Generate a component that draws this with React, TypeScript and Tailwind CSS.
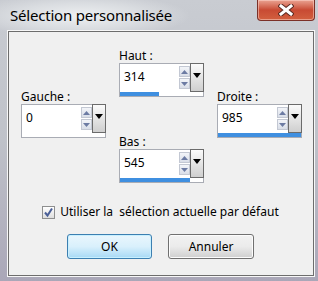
import React from 'react'

// Spin box with arrows, drop button and a progress bar underneath
function SpinBox({ value, fill }: { value: string; fill: number }) {
  return (
    <div className="flex h-[34px] w-[85px] flex-col border border-[#a9acb4] bg-white">
      <div className="flex h-[28px]">
        <div className="flex-1 pl-[4px] pt-[5px] text-[12px] leading-[15px] text-black">{value}</div>
        <div className="flex w-[11px] flex-col gap-[1px] pt-[2px]">
          <div className="flex h-[11px] items-center justify-center border border-[#c3c8d3] bg-gradient-to-b from-[#f3f5f9] to-[#d9dee8]">
            <svg width="7" height="4" viewBox="0 0 7 4">
              <polygon points="0,4 3.5,0 7,4" fill="#6c7ba3" />
            </svg>
          </div>
          <div className="flex h-[11px] items-center justify-center border border-[#c3c8d3] bg-gradient-to-b from-[#f3f5f9] to-[#d9dee8]">
            <svg width="7" height="4" viewBox="0 0 7 4">
              <polygon points="0,0 3.5,4 7,0" fill="#6c7ba3" />
            </svg>
          </div>
        </div>
        <div className="-mr-[1px] -mt-[1px] flex h-[29px] w-[14px] justify-center border border-[#6b6b6b] bg-gradient-to-b from-[#fbfbfb] to-[#cfcfcf] pt-[9px]">
          <svg width="8" height="5" viewBox="0 0 8 5">
            <polygon points="0,0 4,5 8,0" fill="#000" />
          </svg>
        </div>
      </div>
      <div className="mt-auto h-[4px] w-full">
        <div className="h-full bg-[#3f8fe0]" style={{ width: `${fill}%` }} />
      </div>
    </div>
  )
}

function Field({ label, value, fill }: { label: string; value: string; fill: number }) {
  return (
    <div className="flex flex-col">
      <div className="h-[15px] text-[12px] leading-[15px] text-black">{label}</div>
      <SpinBox value={value} fill={fill} />
    </div>
  )
}

export default function App() {
  return (
    <div
      className="flex h-[281px] w-[318px] flex-col overflow-hidden bg-gradient-to-b from-[#c9ccd2] via-[#bfc2c9] to-[#aaa7b8]"
      style={{ fontFamily: '"Noto Sans", "Open Sans", sans-serif' }}
    >
      {/* Title bar */}
      <div className="flex h-[31px] items-start bg-[radial-gradient(ellipse_110px_22px_at_80px_16px,#eef0f2_0%,#d9dce0_60%,transparent_100%)]">
        <div className="pl-[10px] pt-[5px] text-[15px] leading-[20px] tracking-[-0.2px] text-black">
          Sélection personnalisée
        </div>
        <div className="ml-auto mr-[3px] flex h-[21px] w-[58px] items-center justify-center rounded-b-[4px] border border-t-0 border-[#7b3028] bg-gradient-to-b from-[#e9a392] via-[#c84a33] to-[#d2603f] shadow-[inset_0_0_0_1px_rgba(255,220,210,0.5)]">
          <svg width="16" height="12" viewBox="0 0 16 12">
            <path d="M3 2 L13 10 M13 2 L3 10" stroke="#5a2a22" strokeWidth="5" strokeLinecap="square" />
            <path d="M3 2 L13 10 M13 2 L3 10" stroke="#fff" strokeWidth="3" strokeLinecap="square" />
          </svg>
        </div>
      </div>

      {/* Body */}
      <div className="ml-[8px] mr-[4px] flex h-[245px] flex-col border border-[#6d6d6d] bg-[#f0f0f0] pl-[12px] pr-[11px] shadow-[0_0_0_1px_#f7f7f7]">
        <div className="flex gap-[13px]">
          <div className="pt-[57px]">
            <Field label="Gauche :" value="0" fill={0} />
          </div>
          <div className="flex flex-col gap-[37px] pt-[16px]">
            <Field label="Haut :" value="314" fill={47} />
            <Field label="Bas :" value="545" fill={84} />
          </div>
          <div className="pt-[57px]">
            <Field label="Droite :" value="985" fill={100} />
          </div>
        </div>

        <div className="mt-[21px] flex h-[16px] items-center justify-center gap-[5px] pr-[2px]">
          <div className="flex h-[13px] w-[13px] items-center justify-center border border-[#8e8f8f] bg-gradient-to-b from-[#ffffff] to-[#dedede]">
            <svg width="11" height="11" viewBox="0 0 11 11">
              <path d="M2 5.5 L4.5 8.5 L9 1.5" stroke="#4a5f97" strokeWidth="2" fill="none" />
            </svg>
          </div>
          <span className="whitespace-pre text-[12px] leading-[16px] text-black">Utiliser la  sélection actuelle par défaut</span>
        </div>

        <div className="mt-[14px] flex justify-center gap-[16px] pr-[2px]">
          <button className="h-[25px] w-[85px] rounded-[3px] border border-[#3c7fb1] bg-gradient-to-b from-[#eaf6fd] via-[#d9f0fc] to-[#a7d9f5] text-[12px] text-black shadow-[inset_0_0_0_1px_#c8f0ff]">
            OK
          </button>
          <button className="h-[25px] w-[86px] rounded-[3px] border border-[#707070] bg-gradient-to-b from-[#f2f2f2] via-[#ebebeb] to-[#cfcfcf] text-[12px] text-black shadow-[inset_0_0_0_1px_#fcfcfc]">
            Annuler
          </button>
        </div>
      </div>
    </div>
  )
}
